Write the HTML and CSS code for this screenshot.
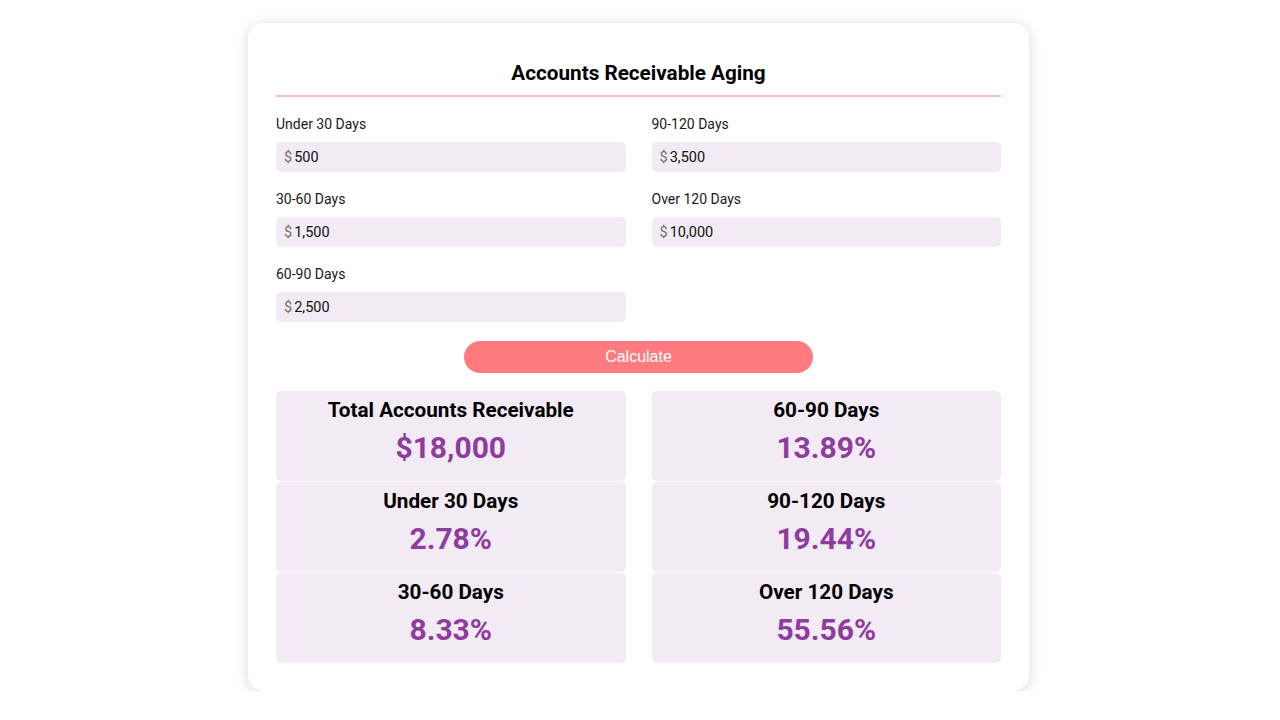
FILE: index.html
```html
<!DOCTYPE html>
<html lang="en">
<head>
<meta charset="utf-8">
<title>Accounts Receivable Aging</title>
<link rel="stylesheet" href="styles.css">
</head>
<body>
<div class="calc">
  <h2 class="calc-title">Accounts Receivable Aging</h2>
  <div class="form-grid">
    <div class="field">
      <label class="field-label">Under 30 Days</label>
      <div class="field-input"><span class="cur">$</span><span class="val">500</span></div>
    </div>
    <div class="field">
      <label class="field-label">90-120 Days</label>
      <div class="field-input"><span class="cur">$</span><span class="val">3,500</span></div>
    </div>
    <div class="field">
      <label class="field-label">30-60 Days</label>
      <div class="field-input"><span class="cur">$</span><span class="val">1,500</span></div>
    </div>
    <div class="field">
      <label class="field-label">Over 120 Days</label>
      <div class="field-input"><span class="cur">$</span><span class="val">10,000</span></div>
    </div>
    <div class="field">
      <label class="field-label">60-90 Days</label>
      <div class="field-input"><span class="cur">$</span><span class="val">2,500</span></div>
    </div>
  </div>
  <div class="btn-row">
    <button class="calc-btn">Calculate</button>
  </div>
  <div class="results">
    <div class="card"><div class="card-title">Total Accounts Receivable</div><div class="card-value">$18,000</div></div>
    <div class="card"><div class="card-title">60-90 Days</div><div class="card-value">13.89%</div></div>
    <div class="card"><div class="card-title">Under 30 Days</div><div class="card-value">2.78%</div></div>
    <div class="card"><div class="card-title">90-120 Days</div><div class="card-value">19.44%</div></div>
    <div class="card"><div class="card-title">30-60 Days</div><div class="card-value">8.33%</div></div>
    <div class="card"><div class="card-title">Over 120 Days</div><div class="card-value">55.56%</div></div>
  </div>
</div>
</body>
</html>
```

FILE: styles.css
```css
* { box-sizing: border-box; }
body {
  margin: 0;
  background: #ffffff;
  font-family: Roboto, "Liberation Sans", sans-serif;
  color: #111;
}
.calc {
  width: 781px;
  margin: 23px 0 0 calc(50% - 392px);
  padding: 28px;
  background: #fff;
  border-radius: 16px;
  box-shadow: 0 2px 14px rgba(0, 0, 0, 0.16);
}
.calc-title {
  margin: 0;
  padding: 10px 0 10px;
  font-size: 20.7px;
  line-height: 24px;
  font-weight: 700;
  text-align: center;
  color: #000;
  border-bottom: 2px solid #ffbcbf;
}
.form-grid {
  display: grid;
  grid-template-columns: 1fr 1fr;
  column-gap: 26px;
  row-gap: 19px;
  padding-top: 19px;
}
.field {
  display: flex;
  flex-direction: column;
}
.field-label {
  font-size: 14px;
  line-height: 17px;
  margin-bottom: 9px;
  color: #1a1a1a;
}
.field-input {
  height: 30px;
  background: #f3ebf4;
  border-radius: 5px;
  display: flex;
  align-items: center;
  padding-left: 8px;
  padding-top: 1px;
  font-size: 14.5px;
}
.cur {
  color: #707070;
  margin-right: 2px;
}
.val {
  color: #111;
}
.btn-row {
  display: flex;
  justify-content: center;
  padding-top: 19px;
}
.calc-btn {
  width: 349px;
  height: 32px;
  border: none;
  border-radius: 16px;
  background: #ff7b80;
  color: #fff;
  font-family: "Liberation Sans", Arial, sans-serif;
  font-size: 16px;
  padding: 0;
}
.results {
  display: grid;
  grid-template-columns: 1fr 1fr;
  column-gap: 26px;
  row-gap: 1px;
  padding-top: 18px;
}
.card {
  height: 90px;
  background: #f3ebf4;
  border-radius: 5px;
  padding-top: 7px;
  text-align: center;
}
.card-title {
  font-size: 20.7px;
  line-height: 24px;
  font-weight: 700;
  color: #000;
}
.card-value {
  margin-top: 8px;
  font-size: 30px;
  line-height: 36px;
  font-weight: 700;
  color: #8e3ca0;
}
```
